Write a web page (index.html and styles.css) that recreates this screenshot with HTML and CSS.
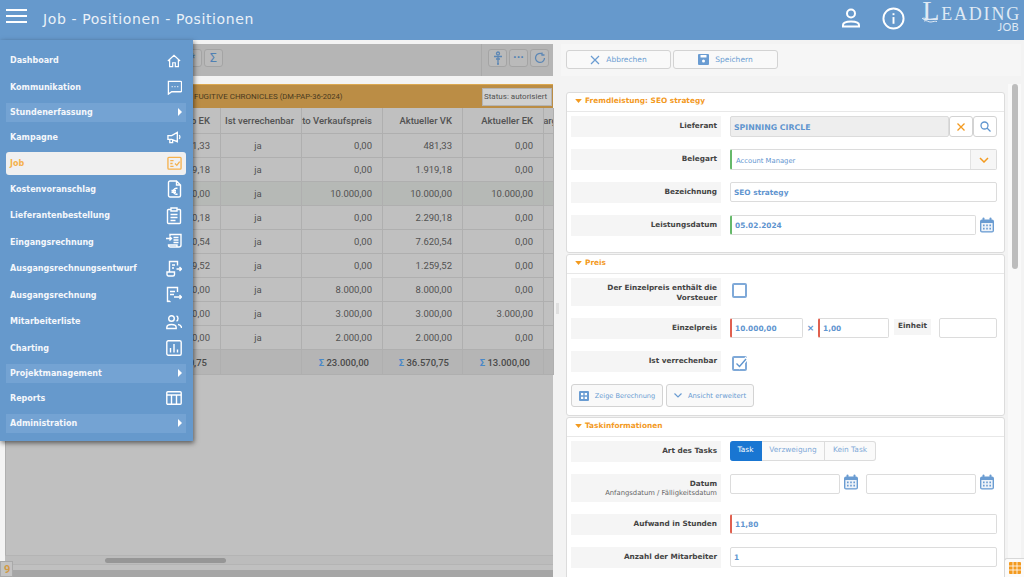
FILE: index.html
```html
<!DOCTYPE html>
<html lang="de">
<head>
    <meta charset="UTF-8">
    <meta name="viewport" content="width=device-width, initial-scale=1.0">
    <title>Job - Positionen - Positionen</title>
    <link rel="stylesheet" href="styles.css">
</head>
<body>
    <svg class="sprite" width="0" height="0">
        <symbol id="cal" viewBox="0 0 16 16">
            <path d="M1 4.500a2 2 0 0 1 2-2h10a2 2 0 0 1 2 2v9a2 2 0 0 1-2 2H3a2 2 0 0 1-2-2z" fill="#6a9cd2"/>
            <rect x="2.400" y="6" width="11.200" height="8.200" fill="#eef3f9"/>
            <rect x="3.500" y="0.600" width="2" height="3" rx="1" fill="#6a9cd2"/>
            <rect x="10.500" y="0.600" width="2" height="3" rx="1" fill="#6a9cd2"/>
            <path d="M4 7.600h1.600v1.600H4zM7.200 7.600h1.600v1.600H7.200zM10.400 7.600H12v1.600h-1.600zM4 10.800h1.600v1.600H4zM7.200 10.800h1.600v1.600H7.200zM10.400 10.800H12v1.600h-1.600z" fill="#6a9cd2"/>
        </symbol>
        <symbol id="arrow-down" viewBox="0 0 10 6">
            <path d="M0 0h10L5 6z" fill="#f39a1f"/>
        </symbol>
    </svg>

    <header class="top-bar">
        <button class="burger"><span></span><span></span><span></span></button>
        <div class="page-title">Job - Positionen - Positionen</div>
        <div class="top-icons">
            <svg width="20" height="20" viewBox="0 0 20 20" fill="none" stroke="#fff" stroke-width="2">
                <circle cx="10" cy="5.500" r="4"/>
                <path d="M2 18.500v-1.500c0-2.500 2.500-3.500 8-3.500s8 1 8 3.500v1.500z"/>
            </svg>
            <svg class="info-icon" width="23" height="23" viewBox="0 0 24 24" fill="none" stroke="#fff" stroke-width="2">
                <circle cx="12" cy="12" r="10.500"/>
                <path d="M12 10.500v7"/>
                <path d="M12 6.500v2"/>
            </svg>
        </div>
        <div class="logo">
            <div class="logo-name"><span class="logo-l">L</span>eading</div>
            <svg class="logo-wave" width="17" height="6" viewBox="0 0 17 6" fill="none" stroke="#dfe9f4" stroke-width="1">
                <path d="M0 1.500c3-1.500 5 1.500 8 1s5-1.500 8-.5"/>
                <path d="M2 4c3-1.500 4 1.500 7 1s4-1 6-.5"/>
            </svg>
            <div class="logo-sub">JOB</div>
        </div>
    </header>

    <nav class="side-menu">
        <a class="menu-item">Dashboard
            <svg class="icon-small" width="14" height="14" viewBox="0 0 16 16"><path d="M1 8l7-6.500L15 8M3 6.500V14.500h3.500v-4.500h3v4.500H13V6.500"/></svg>
        </a>
        <a class="menu-item">Kommunikation
            <svg width="15" height="15" viewBox="0 0 16 16"><path d="M1.500 1.500h13a1 1 0 0 1 1 1v9a1 1 0 0 1-1 1H5l-3.500 2.500z"/><path d="M5 7h1M8 7h1M11 7h1"/></svg>
        </a>
        <a class="menu-item has-sub">Stundenerfassung<span class="sub-arrow"></span></a>
        <a class="menu-item">Kampagne
            <svg width="15" height="15" viewBox="0 0 16 16"><path d="M1 6h4l6-3.500v10L5 10H1zM3 10v3.500h3V10.500M13 5.500c1 1 1 3 0 4"/></svg>
        </a>
        <a class="menu-item active">Job
            <svg width="15" height="15" viewBox="0 0 16 16"><rect x="1" y="1.500" width="14" height="12.500" rx="1"/><path d="M3.500 5H7M3.500 8H6M3.500 11H7M8.500 8l2 2 3-4"/></svg>
        </a>
        <a class="menu-item">Kostenvoranschlag
            <svg width="15" height="18" viewBox="0 0 15 18"><path d="M1.500 2.500A1.500 1.500 0 0 1 3 1h6.500L13.500 5v10.500a1.500 1.500 0 0 1-1.500 1.500H3a1.500 1.500 0 0 1-1.500-1.500zM9.500 1v4h4"/><path d="M10.500 8.500a3 3 0 1 0 0 5.500M4.500 10.500h4.500M4.500 12.200h4.500"/></svg>
        </a>
        <a class="menu-item">Lieferantenbestellung
            <svg width="16" height="18" viewBox="0 0 16 18"><path d="M5 2.500H2.500a1 1 0 0 0-1 1v12a1 1 0 0 0 1 1h11a1 1 0 0 0 1-1v-12a1 1 0 0 0-1-1H11M5 1h6v3H5zM4.500 7.500h7M4.500 10.500h7M4.500 13.500h5"/></svg>
        </a>
        <a class="menu-item">Eingangsrechnung
            <svg width="16" height="18" viewBox="0 0 16 18"><path d="M4 3V1.500h11v10.500a2 2 0 0 1-2 2H4.500a2 2 0 0 1-2-2h8.500v2M0 5.500h5M3.500 3.500l2 2-2 2M7.500 4.500h5M7.500 7h5M7.500 9.500h5"/></svg>
        </a>
        <a class="menu-item">Ausgangsrechnungsentwurf
            <svg width="16" height="18" viewBox="0 0 16 18"><path d="M3.500 12V1.500h8v4M1 12h7.500v2.500a1.500 1.500 0 0 1-1.500 1.500H2.500A1.500 1.500 0 0 1 1 14.500zM6 5h3M6 8h2M10.500 9h5M13.500 7l2 2-2 2"/></svg>
        </a>
        <a class="menu-item">Ausgangsrechnung
            <svg width="16" height="18" viewBox="0 0 16 18"><path d="M1.500 16V1.500h10V6M1.500 16l1.500-1 1.500 1M4 5.500h5M4 8.500h4M8 11h7.500M13.500 9l2 2-2 2"/></svg>
        </a>
        <a class="menu-item">Mitarbeiterliste
            <svg width="16" height="16" viewBox="0 0 16 16"><circle cx="5.500" cy="4.500" r="2.800"/><path d="M.8 14.500v-1c0-2 1.700-3 4.700-3s4.700 1 4.700 3v1zM10.500 2c2 .5 2 4.500 0 5M12 10.500c2 .3 3.500 1.300 3.500 3.500"/></svg>
        </a>
        <a class="menu-item">Charting
            <svg width="16" height="16" viewBox="0 0 16 16"><rect x=".8" y=".8" width="14.400" height="14.400" rx="1.500"/><path d="M4.500 8v4.500M8 4v8.500M11.500 9.500v3"/></svg>
        </a>
        <a class="menu-item has-sub">Projektmanagement<span class="sub-arrow"></span></a>
        <a class="menu-item">Reports
            <svg width="16" height="14" viewBox="0 0 16 14"><rect x=".8" y=".8" width="14.400" height="12.400" rx="1"/><path d="M.8 4h14.400M5.500 4v9M10.500 4v9"/></svg>
        </a>
        <a class="menu-item has-sub">Administration<span class="sub-arrow"></span></a>
    </nav>

    <main class="main">
        <section class="left-pane">
            <div class="list-toolbar">
                <div class="tool-group">
                    <span class="tool-btn">*</span>
                    <span class="tool-btn">Σ</span>
                </div>
                <div class="tool-group tool-right">
                    <span class="tool-btn">
                        <svg width="12" height="14" viewBox="0 0 12 14" fill="none" stroke="#5c87b5" stroke-width="1.300"><circle cx="6" cy="2.500" r="1.500"/><path d="M2 5.500h8M6 5.500v7M4 8h4M5 13h2"/></svg>
                    </span>
                    <span class="tool-btn tool-dots">···</span>
                    <span class="tool-btn">
                        <svg width="12" height="12" viewBox="0 0 12 12" fill="none" stroke="#5c87b5" stroke-width="1.300"><path d="M10.500 6A4.500 4.500 0 1 1 8.500 2.200M8 .5v2.500h2.500"/></svg>
                    </span>
                </div>
            </div>
            <div class="job-bar">
                <span class="job-name">FUGITIVE CHRONICLES <small>(DM-PAP-36-2024)</small></span>
                <span class="job-status">Status: autorisiert</span>
            </div>
            <table class="pos-table">
                <colgroup>
                    <col class="col-a"><col class="col-b"><col class="col-b"><col class="col-c"><col class="col-b"><col class="col-d">
                </colgroup>
                <thead>
                    <tr>
                        <th class="num">Preis ab EK</th>
                        <th>Ist verrechenbar</th>
                        <th class="num flush"><div class="clip">Netto Verkaufspreis</div></th>
                        <th class="num">Aktueller VK</th>
                        <th class="num">Aktueller EK</th>
                        <th><div class="clip-c">Marge</div></th>
                    </tr>
                </thead>
                <tbody>
                    <tr><td class="num">481,33</td><td>ja</td><td class="num">0,00</td><td class="num">481,33</td><td class="num">0,00</td><td></td></tr>
                    <tr><td class="num">1.919,18</td><td>ja</td><td class="num">0,00</td><td class="num">1.919,18</td><td class="num">0,00</td><td></td></tr>
                    <tr class="selected"><td class="num">10.000,00</td><td>ja</td><td class="num">10.000,00</td><td class="num">10.000,00</td><td class="num">10.000,00</td><td></td></tr>
                    <tr><td class="num">2.290,18</td><td>ja</td><td class="num">0,00</td><td class="num">2.290,18</td><td class="num">0,00</td><td></td></tr>
                    <tr><td class="num">7.620,54</td><td>ja</td><td class="num">0,00</td><td class="num">7.620,54</td><td class="num">0,00</td><td></td></tr>
                    <tr><td class="num">1.259,52</td><td>ja</td><td class="num">0,00</td><td class="num">1.259,52</td><td class="num">0,00</td><td></td></tr>
                    <tr><td class="num">8.000,00</td><td>ja</td><td class="num">8.000,00</td><td class="num">8.000,00</td><td class="num">0,00</td><td></td></tr>
                    <tr><td class="num">3.000,00</td><td>ja</td><td class="num">3.000,00</td><td class="num">3.000,00</td><td class="num">3.000,00</td><td></td></tr>
                    <tr><td class="num">2.000,00</td><td>ja</td><td class="num">2.000,00</td><td class="num">2.000,00</td><td class="num">0,00</td><td></td></tr>
                </tbody>
                <tfoot>
                    <tr>
                        <td class="num">36.570,75</td>
                        <td></td>
                        <td class="num"><b>Σ</b> 23.000,00</td>
                        <td class="num"><b>Σ</b> 36.570,75</td>
                        <td class="num"><b>Σ</b> 13.000,00</td>
                        <td></td>
                    </tr>
                </tfoot>
            </table>
            <div class="table-rest"></div>
            <div class="h-scroll"><span class="h-thumb"></span></div>
            <div class="status-strip"></div>
            <div class="count-badge">9</div>
        </section>

        <div class="splitter"><span class="split-handle"></span></div>

        <section class="right-pane">
            <div class="form-toolbar">
                <button class="btn btn-wide">
                    <svg width="10" height="10" viewBox="0 0 10 10" fill="none" stroke="#6a9cd2" stroke-width="1.200"><path d="M1 1l8 8M9 1l-8 8"/></svg>
                    Abbrechen
                </button>
                <button class="btn btn-wide">
                    <svg width="11" height="11" viewBox="0 0 11 11"><path d="M0 1a1 1 0 0 1 1-1h9a1 1 0 0 1 1 1v9a1 1 0 0 1-1 1H1a1 1 0 0 1-1-1z" fill="#6a9cd2"/><path d="M2.500 1h6v2.500h-6z" fill="#fff"/><circle cx="5.500" cy="7" r="1.500" fill="#fff"/></svg>
                    Speichern
                </button>
            </div>
            <div class="form-area">
                <div class="panels">
                    <div class="panel">
                        <div class="panel-head"><svg width="7" height="4"><use href="#arrow-down"/></svg>Fremdleistung: SEO strategy</div>
                        <div class="field-row">
                            <label>Lieferant</label>
                            <div class="field-line">
                                <div class="input input-grey grow bold">SPINNING CIRCLE</div>
                                <span class="square-btn">
                                    <svg width="10" height="10" viewBox="0 0 10 10" fill="none" stroke="#f39a1f" stroke-width="1.300"><path d="M1.500 1.500l7 7M8.500 1.500l-7 7"/></svg>
                                </span>
                                <span class="square-btn">
                                    <svg width="11" height="11" viewBox="0 0 11 11" fill="none" stroke="#5f95cf" stroke-width="1.300"><circle cx="4.500" cy="4.500" r="3.500"/><path d="M7 7l3.500 3.500"/></svg>
                                </span>
                            </div>
                        </div>
                        <div class="field-row">
                            <label>Belegart</label>
                            <div class="input mark-green select-box grow">
                                <span class="select-text">Account Manager</span>
                                <span class="select-arrow">
                                    <svg width="10" height="6" viewBox="0 0 10 6" fill="none" stroke="#f39a1f" stroke-width="1.500"><path d="M1 1l4 4 4-4"/></svg>
                                </span>
                            </div>
                        </div>
                        <div class="field-row">
                            <label>Bezeichnung</label>
                            <div class="input bold">SEO strategy</div>
                        </div>
                        <div class="field-row">
                            <label>Leistungsdatum</label>
                            <div class="field-line">
                                <div class="input mark-green grow bold">05.02.2024</div>
                                <svg class="cal-icon" width="16" height="16"><use href="#cal"/></svg>
                            </div>
                        </div>
                    </div>

                    <div class="panel">
                        <div class="panel-head"><svg width="7" height="4"><use href="#arrow-down"/></svg>Preis</div>
                        <div class="field-row row-tall">
                            <label>Der Einzelpreis enthält die Vorsteuer</label>
                            <div><span class="check-box"></span></div>
                        </div>
                        <div class="field-row">
                            <label>Einzelpreis</label>
                            <div class="field-line">
                                <div class="input mark-red bold price-input">10.000,00</div>
                                <span class="times">×</span>
                                <div class="input mark-red bold price-input">1,00</div>
                                <span class="unit-label">Einheit</span>
                                <div class="input unit-input"></div>
                            </div>
                        </div>
                        <div class="field-row">
                            <label>Ist verrechenbar</label>
                            <div>
                                <span class="check-box">
                                    <svg width="13" height="13" viewBox="0 0 13 13" fill="none" stroke-width="1.400"><path d="M2 5l3.500 3.500L13 0" stroke="#fff" stroke-width="4"/><path d="M2.500 5.500l3 3L12 1" stroke="#5f95cf"/></svg>
                                </span>
                            </div>
                        </div>
                        <div class="panel-actions">
                            <button class="btn btn-zeige">
                                <svg width="10" height="10" viewBox="0 0 10 10"><rect width="10" height="10" rx="1" fill="#6a9cd2"/><path d="M2 2h2.300v2.300H2zM5.700 2H8v2.300H5.700zM2 5.700h2.300V8H2zM5.700 5.700H8V8H5.700z" fill="#fff"/></svg>
                                Zeige Berechnung
                            </button>
                            <button class="btn btn-ansicht">
                                <svg width="8" height="5" viewBox="0 0 8 5" fill="none" stroke="#6a9cd2" stroke-width="1.200"><path d="M.5 .5L4 4l3.500-3.500"/></svg>
                                Ansicht erweitert
                            </button>
                        </div>
                    </div>

                    <div class="panel">
                        <div class="panel-head"><svg width="7" height="4"><use href="#arrow-down"/></svg>Taskinformationen</div>
                        <div class="field-row">
                            <label>Art des Tasks</label>
                            <div class="segments">
                                <span class="segment seg-on">Task</span>
                                <span class="segment seg-mid">Verzweigung</span>
                                <span class="segment seg-end">Kein Task</span>
                            </div>
                        </div>
                        <div class="field-row row-date">
                            <label>Datum<small>Anfangsdatum / Fälligkeitsdatum</small></label>
                            <div class="field-line date-line">
                                <div class="input grow"></div>
                                <svg class="cal-icon" width="16" height="16"><use href="#cal"/></svg>
                                <div class="input grow date-second"></div>
                                <svg class="cal-icon" width="16" height="16"><use href="#cal"/></svg>
                            </div>
                        </div>
                        <div class="field-row">
                            <label>Aufwand in Stunden</label>
                            <div class="input mark-red bold">11,80</div>
                        </div>
                        <div class="field-row">
                            <label>Anzahl der Mitarbeiter</label>
                            <div class="input bold">1</div>
                        </div>
                    </div>
                </div>
                <div class="v-scroll"><span class="v-thumb"></span></div>
            </div>
            <button class="grid-btn">
                <svg width="12" height="12" viewBox="0 0 12 12"><rect width="12" height="12" rx="1" fill="#f39a1f"/><path d="M4 0v12M8 0v12M0 4h12M0 8h12" stroke="#fff" stroke-width=".8"/></svg>
            </button>
        </section>
    </main>
</body>
</html>
```

FILE: styles.css
```css
* {
    margin: 0;
    padding: 0;
    box-sizing: border-box;
}

html, body {
    height: 577px;
    overflow: hidden;
}

body {
    background: #f3f3f3;
    font-family: "DejaVu Sans", sans-serif;
    position: relative;
}

.sprite {
    position: absolute;
}

/* top bar */
.top-bar {
    height: 40px;
    background: #6699cc;
    display: flex;
    align-items: center;
    color: white;
}

.burger {
    width: 21px;
    margin-left: 6px;
    margin-top: -9px;
    background: none;
    border: none;
    display: flex;
    flex-direction: column;
    gap: 4px;
}

.burger span {
    display: block;
    height: 2px;
    background: white;
}

.page-title {
    margin-left: 16px;
    margin-top: -2px;
    font-size: 14px;
    letter-spacing: .6px;
    color: #eaf1f8;
}

.top-icons {
    margin-left: auto;
    display: flex;
    align-items: center;
    gap: 21px;
    margin-top: -4px;
}

.logo {
    width: 101px;
    margin-left: 15px;
    margin-right: 3px;
    height: 40px;
    position: relative;
    color: #dfe9f4;
    text-align: right;
}

.logo-name {
    font-family: "Liberation Serif", serif;
    font-variant: small-caps;
    font-size: 25px;
    letter-spacing: 1.800px;
    line-height: 21px;
    white-space: nowrap;
}

.logo-l {
    font-size: 28px;
}

.logo-wave {
    position: absolute;
    left: 2px;
    top: 17px;
}

.logo-sub {
    font-family: Lato, sans-serif;
    font-size: 11px;
    line-height: 10px;
    padding-right: 2px;
    letter-spacing: .3px;
}

/* side menu */
.side-menu {
    position: absolute;
    left: 0;
    top: 40px;
    width: 193px;
    height: 401px;
    z-index: 5;
    background: #6699cc;
    padding: 7.500px 7px 0 6px;
    box-shadow: 1px 2px 5px rgba(0, 0, 0, .55);
}

.menu-item {
    display: flex;
    align-items: center;
    justify-content: space-between;
    height: 26.500px;
    padding: 0 4px;
    font-size: 8px;
    font-weight: bold;
    color: #f4f7fb;
}

.menu-item svg {
    fill: none;
    stroke: white;
    stroke-width: 1.400;
}

.menu-item .icon-small {
    margin-right: 1px;
}

.menu-item.has-sub {
    height: 19.500px;
    margin: 2px 0;
    background: #74a3d3;
}

.sub-arrow {
    width: 0;
    height: 0;
    border-left: 4px solid white;
    border-top: 4px solid transparent;
    border-bottom: 4px solid transparent;
}

.menu-item.active {
    height: 23px;
    margin: 1px 0 1.500px;
    background: #f0f0f0;
    border-radius: 3px;
    color: #f5b14c;
}

.menu-item.active svg {
    stroke: #f5b14c;
}

/* main area */
.main {
    display: flex;
    height: 537px;
}

.left-pane {
    width: 553px;
    padding-top: 4px;
    padding-left: 5px;
    background: #f3f3f3;
    display: flex;
    flex-direction: column;
    position: relative;
    font-family: Roboto, sans-serif;
}

.list-toolbar {
    height: 32px;
    flex-shrink: 0;
    background: #b5b5b5;
    display: flex;
    justify-content: space-between;
    padding: 5px 4px 0 178px;
}

.tool-group {
    display: flex;
    gap: 2px;
}

.tool-right {
    border-left: 1px solid #a9a9a9;
    margin-top: -5px;
    padding: 5px 0 0 6px;
}

.tool-btn {
    width: 19px;
    height: 18px;
    border: 1px solid #a4a4a4;
    border-radius: 3px;
    background: #bababa;
    color: #4f80b3;
    font-size: 12px;
    display: flex;
    align-items: center;
    justify-content: center;
}

.tool-dots {
    font-weight: bold;
}

.job-bar {
    margin-top: 8px;
    height: 24px;
    flex-shrink: 0;
    background: #bb8d45;
    border-top: 1px solid #dba850;
    display: flex;
    align-items: center;
    justify-content: space-between;
    padding: 0 1px 0 189px;
    color: #4a3a20;
}

.job-name {
    font-size: 8px;
}

.job-name small {
    font-size: 7.600px;
}

.job-status {
    background: #d0d0d0;
    border: 1px solid #b4b4b4;
    height: 18px;
    width: 70px;
    font-size: 8px;
    line-height: 16px;
    padding-left: 1px;
    color: #505050;
    white-space: nowrap;
    overflow: hidden;
}

.pos-table {
    width: 548px;
    table-layout: fixed;
    border-collapse: collapse;
    background: #c0c0c0;
    color: #525252;
    font-size: 9.500px;
    flex-shrink: 0;
}

.col-a { width: 215px; }
.col-b { width: 81px; }
.col-c { width: 80px; }
.col-d { width: 10px; }

.pos-table th,
.pos-table td {
    border: 1px solid #afafaf;
    border-top: none;
    height: 24.100px;
    padding: 0 10px 0 4px;
    text-align: center;
    white-space: nowrap;
    overflow: hidden;
}

.pos-table th {
    height: 25px;
    font-weight: 500;
}

.pos-table .num {
    text-align: right;
}

.pos-table .flush {
    padding-left: 0;
}

.clip {
    display: flex;
    justify-content: flex-end;
    overflow: hidden;
}

.pos-table th:last-child,
.pos-table td:last-child {
    padding: 0;
}

.clip-c {
    display: flex;
    justify-content: center;
    overflow: hidden;
}

.selected td {
    background: #b6b9b6;
}

.pos-table tfoot td {
    background: #b5b5b5;
    font-weight: 500;
    height: 25px;
    padding-right: 13px;
    color: #4a4a4a;
}

.pos-table tfoot b {
    color: #4a88c8;
    font-weight: bold;
}

.table-rest {
    flex: 1;
    background: #c0c0c0;
    border-left: 1px solid #afafaf;
}

.h-scroll {
    height: 10px;
    flex-shrink: 0;
    background: #bcbcbc;
    border-top: 1px solid #b4b4b4;
    border-bottom: 1px solid #b4b4b4;
    padding: 2px 0 0 100px;
}

.h-thumb {
    display: block;
    width: 121px;
    height: 5px;
    border-radius: 3px;
    background: #969696;
}

.status-strip {
    height: 12px;
    flex-shrink: 0;
    background: linear-gradient(#c0c0c0 0 5px, #a6a6a6 5px);
}

.count-badge {
    position: absolute;
    left: 0;
    bottom: 0;
    width: 13px;
    height: 16px;
    border: 1px solid #a9a9a9;
    background: #c3c3c3;
    color: #d29a45;
    font-size: 11px;
    font-weight: bold;
    padding-left: 3px;
    line-height: 15px;
}

.splitter {
    width: 8px;
    flex-shrink: 0;
    display: flex;
    align-items: center;
    padding-left: 3px;
}

.split-handle {
    width: 3px;
    height: 11px;
    background: #e0e0e0;
}

/* right pane */
.right-pane {
    flex: 1;
    position: relative;
    padding-top: 4px;
}

.form-toolbar {
    height: 32px;
    margin-right: 3px;
    background: #f6f6f6;
    padding: 6px 5px;
    display: flex;
    gap: 2px;
}

.btn {
    display: flex;
    align-items: center;
    justify-content: center;
    gap: 6px;
    background: #f9f9f9;
    border: 1px solid #d3d3d3;
    border-radius: 3px;
    font-family: "DejaVu Sans", sans-serif;
    font-size: 7.500px;
    color: #6a9cd2;
}

.btn-wide {
    width: 105px;
    height: 19px;
}

.form-area {
    display: flex;
    margin-top: 8px;
}

.panels {
    width: 439px;
    margin-left: 5px;
    padding-top: 8px;
    flex-shrink: 0;
}

.panel {
    background: white;
    border: 1px solid #dcdcdc;
    border-radius: 3px;
    margin-bottom: 1px;
    padding-bottom: 4px;
}

.panel-head {
    height: 19px;
    border-bottom: 1px solid #e8e8e8;
    margin-bottom: 4px;
    padding: 0 0 3px 8px;
    display: flex;
    align-items: center;
    gap: 3px;
    font-size: 7.400px;
    font-weight: bold;
    color: #f39a1f;
}

.field-row {
    display: grid;
    grid-template-columns: 150px 267px;
    column-gap: 9px;
    margin-left: 4px;
    margin-bottom: 12px;
    min-height: 21px;
    align-items: start;
}

.field-row label {
    display: block;
    min-height: 21px;
    padding: 5px 4px 4px 4px;
    background: #f5f5f5;
    text-align: right;
    font-size: 7.300px;
    line-height: 9.500px;
    font-weight: bold;
    color: #444;
}

.field-row small {
    display: block;
    font-weight: normal;
    font-size: 6.800px;
    color: #666;
}

.row-tall label,
.row-date label {
    height: 28px;
}

.field-line {
    display: flex;
    align-items: center;
}

.input {
    height: 20px;
    border: 1px solid #dcdcdc;
    border-radius: 2px;
    background: white;
    padding-left: 3px;
    font-size: 7.400px;
    line-height: 19px;
    color: #5f95cf;
    white-space: nowrap;
}

.grow {
    flex: 1;
}

.bold {
    font-weight: bold;
}

.input-grey {
    height: 21px;
    background: #eeeeee;
    font-size: 7.800px;
    line-height: 21px;
}

.mark-green {
    border-left: 2px solid #66b96a;
}

.mark-red {
    border-left: 2px solid #e0604f;
}

.square-btn {
    width: 24px;
    height: 21px;
    border: 1px solid #d3d3d3;
    border-radius: 3px;
    display: flex;
    align-items: center;
    justify-content: center;
    background: white;
}

.select-box {
    height: 21px;
    display: flex;
    justify-content: space-between;
    padding-left: 4px;
    font-size: 6.800px;
    line-height: 23px;
}

.select-arrow {
    width: 26px;
    border-left: 1px solid #e2e2e2;
    background: #f6f6f6;
    display: flex;
    align-items: center;
    justify-content: center;
}

.cal-icon {
    margin: 0 2px 0 3px;
    flex-shrink: 0;
}

.check-box {
    display: block;
    width: 15px;
    height: 15px;
    margin: 5px 0 0 2px;
    border: 2px solid #7fa9d8;
    border-radius: 2px;
    background: white;
}

.check-box svg {
    display: block;
    overflow: visible;
}

.price-input {
    width: 73px;
}

.times {
    width: 15px;
    text-align: center;
    font-size: 9px;
    font-weight: bold;
    color: #5f95cf;
}

.price-input + .times + .price-input {
    width: 71px;
}

.unit-label {
    margin: -3px 0 0 5px;
    width: 37px;
    height: 16px;
    background: #f5f5f5;
    text-align: center;
    font-size: 7.300px;
    line-height: 14px;
    font-weight: bold;
    color: #444;
}

.unit-input {
    width: 58px;
    margin-left: 8px;
}

.panel-actions {
    display: flex;
    gap: 3px;
    margin: 0 0 4px 4px;
}

.btn-zeige {
    width: 92px;
    height: 23px;
    font-size: 6.600px;
}

.btn-ansicht {
    width: 88px;
    height: 23px;
    font-size: 6.800px;
}

.segments {
    display: flex;
    height: 20px;
    font-size: 7.400px;
}

.segment {
    border: 1px solid #dcdcdc;
    border-left: none;
    color: #80a9d8;
    background: #fafafa;
    line-height: 15px;
    text-align: center;
}

.seg-on {
    width: 32px;
    background: #1976d2;
    border-color: #1976d2;
    color: white;
    border-radius: 3px 0 0 3px;
}

.seg-mid {
    width: 63px;
}

.seg-end {
    width: 51px;
    border-radius: 0 3px 3px 0;
}

.date-line {
    align-items: flex-start;
}

.date-second {
    margin-left: 5px;
}

.v-scroll {
    width: 13px;
    height: 490px;
    margin-left: 3px;
    background: #f9f9f9;
    padding-left: 4px;
}

.v-thumb {
    display: block;
    width: 6px;
    height: 185px;
    border-radius: 3px;
    background: #bdbdbd;
}

.grid-btn {
    position: absolute;
    right: 0;
    bottom: 0;
    width: 20px;
    height: 19px;
    background: #fbfbfb;
    border: 1px solid #d8d8d8;
    border-right: none;
    border-bottom: none;
    border-radius: 3px 0 0 0;
    display: flex;
    align-items: center;
    justify-content: center;
}
```
